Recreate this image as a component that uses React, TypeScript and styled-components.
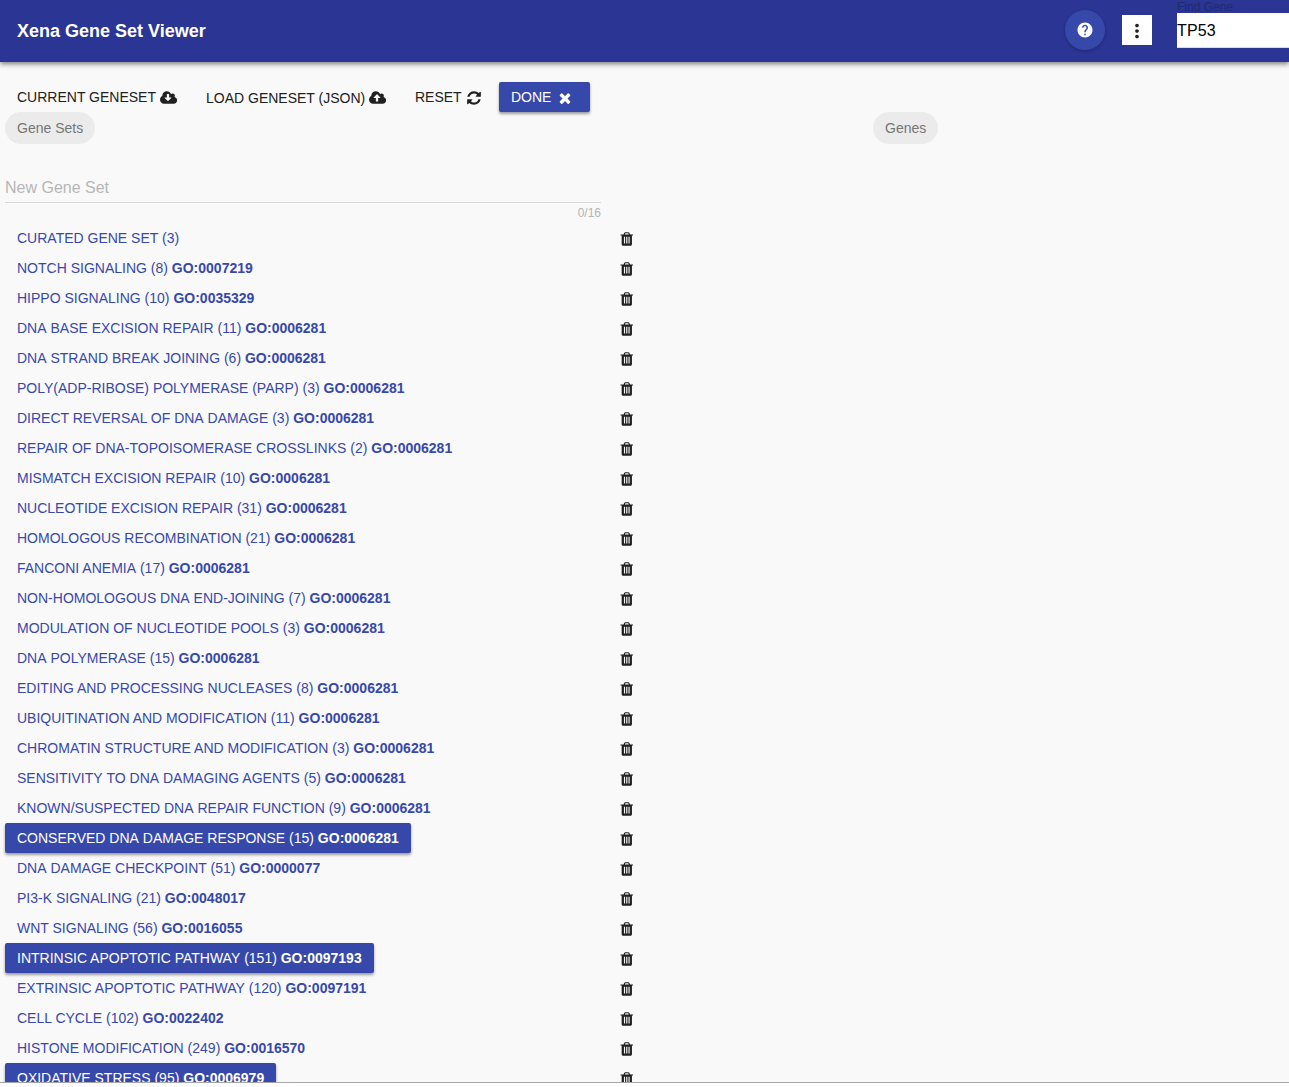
import React from 'react';
import styled, { createGlobalStyle, css } from 'styled-components';

const Global = createGlobalStyle`
  *, *::before, *::after { box-sizing: border-box; }
  html, body { margin: 0; height: 100%; overflow: hidden; background: #fff; }
  body { font-family: Helvetica, "Liberation Sans", Arial, sans-serif; color: #212121; }
  #root { height: 100%; }
`;

const Page = styled.div`
  display: flex;
  flex-direction: column;
  height: 1087px;
  overflow: hidden;
`;

const AppBar = styled.header`
  position: relative;
  z-index: 1;
  flex: none;
  display: flex;
  align-items: center;
  height: 62px;
  padding-left: 17px;
  overflow: visible;
  background: #2a3594;
  box-shadow: 0 2px 5px rgba(0, 0, 0, 0.5);
`;

const Title = styled.h1`
  flex: 1;
  margin: 0;
  font-size: 18px;
  line-height: 24px;
  font-weight: 700;
  color: #fff;
`;

const HelpButton = styled.button`
  display: flex;
  align-items: center;
  justify-content: center;
  width: 40px;
  height: 40px;
  margin: 0 17px 2px 0;
  padding: 0;
  border: 0;
  border-radius: 50%;
  background: #3748ab;
  color: #fff;
  box-shadow: 0 1px 3px rgba(0, 0, 0, 0.25);
`;

const MenuButton = styled.button`
  display: flex;
  align-items: center;
  justify-content: center;
  width: 30px;
  height: 30px;
  margin: 0 25px 2px 0;
  padding: 0;
  border: 0;
  background: #fff;
  color: #212121;
`;

const FindGene = styled.label`
  display: flex;
  flex-direction: column;
  align-self: flex-start;
  width: 112px;
  height: 48px;
`;

const FindLabel = styled.span`
  height: 13px;
  font-size: 12px;
  line-height: 14px;
  color: #202a72;
`;

const FindInput = styled.input`
  width: 100%;
  height: 35px;
  padding: 2px 0 0;
  border: 0;
  border-bottom: 1px solid #dcdcdc;
  border-radius: 0;
  outline: 0;
  background: #fff;
  color: #000;
  font: 16px "Liberation Sans", Arial, sans-serif;
  letter-spacing: 0.15px;
`;

const Content = styled.main`
  flex: none;
  height: 1021px;
  padding: 20px 5px 0;
  overflow: hidden;
  background: #f9f9f9;
  border-bottom: 1px solid #a6a6a6;
`;

const raised = css`
  background: #3748ab;
  color: #fff;
  box-shadow: 0 2px 3px rgba(0, 0, 0, 0.38);
`;

const Toolbar = styled.div`
  display: flex;
  height: 30px;
`;

const ToolButton = styled.button<{ $width: number; $drop?: number; $gap?: number; $raised?: boolean }>`
  display: flex;
  align-items: center;
  gap: ${p => p.$gap ?? 4}px;
  width: ${p => p.$width}px;
  height: 30px;
  padding: ${p => (p.$drop ?? 0) * 2}px 0 0 12px;
  border: 0;
  border-radius: 2px;
  background: transparent;
  color: #212121;
  font: 14px/30px Helvetica, "Liberation Sans", Arial, sans-serif;
  white-space: nowrap;
  ${p => p.$raised && raised}
`;

const Columns = styled.div`
  display: grid;
  grid-template-columns: 868px 1fr;
`;

const Chip = styled.span`
  display: inline-flex;
  align-items: center;
  height: 32px;
  padding: 0 12px;
  border-radius: 16px;
  background: #ebebeb;
  color: #757575;
  font-size: 14px;
`;

const Field = styled.div`
  display: flex;
  flex-direction: column;
  width: 596px;
  height: 79px;
  padding-top: 28px;
`;

const FieldInput = styled.input`
  flex: none;
  height: 31px;
  padding: 2px 0 0;
  border: 0;
  border-bottom: 1px solid #d8d8d8;
  outline: 0;
  background: transparent;
  font: 16px Helvetica, "Liberation Sans", Arial, sans-serif;
  &::placeholder { color: #b6b6b6; opacity: 1; }
`;

const Counter = styled.span`
  align-self: flex-end;
  padding-top: 2px;
  font-size: 12px;
  line-height: 17px;
  color: #b3b3b3;
`;

const List = styled.ul`
  margin: 0;
  padding: 0;
  list-style: none;
`;

const Row = styled.li`
  display: grid;
  grid-template-columns: 615px auto;
  align-items: center;
  justify-content: start;
  height: 30px;
`;

const SetButton = styled.button<{ $selected?: boolean }>`
  justify-self: start;
  height: 30px;
  padding: 0 12px;
  border: 0;
  border-radius: 2px;
  background: transparent;
  color: #3748ab;
  font: 14px/30px Helvetica, "Liberation Sans", Arial, sans-serif;
  white-space: nowrap;
  ${p => p.$selected && raised}
`;

/* A space after A or Y is kerned tight by the font; this one keeps its full width. */
const FullSpace = styled.span`
  font-kerning: none;
`;

const Glyph = styled.svg<{ $w: number; $h: number; $top?: number }>`
  display: block;
  flex: none;
  width: ${p => p.$w}px;
  height: ${p => p.$h}px;
  margin-top: ${p => p.$top ?? 0}px;
  fill: currentColor;
`;

const cloud =
  'm640 288q0 159-112.5 271.5t-271.5 112.5h-1088q-185 0-316.5-131.5t-131.5-316.5q0-130 70-240t188-165q-2-30-2-43 0-212 150-362t362-150q156 0 285.5 87t188.5 231q71-62 166-62 106 0 181 75t75 181q0 76-41 138 130 31 213.5 135.5t83.5 238.5z';

const CloudDownload = () => (
  <Glyph $w={17.14} $h={16} $top={2} viewBox="64 0 1920 1792">
    <path d={'M1344 864q0-14-9-23t-23-9h-224v-352q0-13-9.5-22.5t-22.5-9.5h-192q-13 0-22.5 9.5t-9.5 22.5v352h-224q-13 0-22.5 9.5t-9.5 22.5q0 14 9 23l352 352q9 9 23 9t23-9l351-351q10-12 10-24z' + cloud} />
  </Glyph>
);

const CloudUpload = () => (
  <Glyph $w={17.14} $h={16} viewBox="64 0 1920 1792">
    <path d={'M1344 864q0-14-9-23l-352-352q-9-9-23-9t-23 9l-351 351q-10 12-10 24 0 14 9 23t23 9h224v352q0 13 9.5 22.5t22.5 9.5h192q13 0 22.5-9.5t9.5-22.5v-352h224q13 0 22.5-9.5t9.5-22.5z' + cloud} />
  </Glyph>
);

const Refresh = () => (
  <Glyph $w={16} $h={16} $top={2} viewBox="0 0 1792 1792">
    <path d="M1639 1056q0 5-1 7-64 268-268 434.5t-478 166.5q-146 0-282.5-55t-243.5-157l-129 129q-19 19-45 19t-45-19-19-45v-448q0-26 19-45t45-19h448q26 0 45 19t19 45-19 45l-137 137q71 66 161 102t187 36q134 0 250-65t186-179q11-17 53-117 8-23 30-23h192q13 0 22.5 9.5t9.5 22.5zm25-800v448q0 26-19 45t-45 19h-448q-26 0-45-19t-19-45 19-45l138-138q-148-137-349-137-134 0-250 65t-186 179q-11 17-53 117-8 23-30 23h-199q-13 0-22.5-9.5t-9.5-22.5v-7q65-268 270-434.5t480-166.5q146 0 284 55.5t245 156.5l130-129q19-19 45-19t45 19 19 45z" />
  </Glyph>
);

const Times = () => (
  <Glyph $w={16} $h={16} $top={2} viewBox="0 0 1792 1792">
    <path d="M1490 1322q0 40-28 68l-136 136q-28 28-68 28t-68-28l-294-294-294 294q-28 28-68 28t-68-28l-136-136q-28-28-28-68t28-68l294-294-294-294q-28-28-28-68t28-68l136-136q28-28 68-28t68 28l294 294 294-294q28-28 68-28t68 28l136 136q28 28 28 68t-28 68l-294 294 294 294q28 28 28 68z" />
  </Glyph>
);

const Trash = () => (
  <Glyph $w={13.6} $h={16} $top={2} viewBox="192 0 1408 1792">
    <path d="M704 1376v-704q0-14-9-23t-23-9h-64q-14 0-23 9t-9 23v704q0 14 9 23t23 9h64q14 0 23-9t9-23zm256 0v-704q0-14-9-23t-23-9h-64q-14 0-23 9t-9 23v704q0 14 9 23t23 9h64q14 0 23-9t9-23zm256 0v-704q0-14-9-23t-23-9h-64q-14 0-23 9t-9 23v704q0 14 9 23t23 9h64q14 0 23-9t9-23zm-544-992h448l-48-117q-7-9-17-11h-317q-10 2-17 11zm928 32v64q0 14-9 23t-23 9h-96v948q0 83-47 143.5t-113 60.5h-832q-66 0-113-58.5t-47-141.5v-952h-96q-14 0-23-9t-9-23v-64q0-14 9-23t23-9h309l70-167q15-37 54-63t79-26h320q40 0 79 26t54 63l70 167h309q14 0 23 9t9 23z" />
  </Glyph>
);

const Help = () => (
  <Glyph $w={18} $h={18} viewBox="0 0 24 24">
    <path d="M12 2C6.48 2 2 6.48 2 12s4.48 10 10 10 10-4.48 10-10S17.52 2 12 2zm1 17h-2v-2h2v2zm2.07-7.75l-.9.92C13.45 12.9 13 13.5 13 15h-2v-.5c0-1.1.45-2.1 1.17-2.83l1.24-1.26c.37-.36.59-.86.59-1.41 0-1.1-.9-2-2-2s-2 .9-2 2H8c0-2.21 1.79-4 4-4s4 1.79 4 4c0 .88-.36 1.68-.93 2.25z" />
  </Glyph>
);

const MoreVert = () => (
  <Glyph $w={22} $h={22} $top={1} viewBox="0 0 24 24">
    <path d="M12 8c1.1 0 2-.9 2-2s-.9-2-2-2-2 .9-2 2 .9 2 2 2zm0 2c-1.1 0-2 .9-2 2s.9 2 2 2 2-.9 2-2-.9-2-2-2zm0 6c-1.1 0-2 .9-2 2s.9 2 2 2 2-.9 2-2-.9-2-2-2z" />
  </Glyph>
);

type GeneSet = { name: string; count: number; go?: string; selected?: boolean };

const REPAIR = 'GO:0006281';

const geneSets: GeneSet[] = [
  { name: 'CURATED GENE SET', count: 3 },
  { name: 'NOTCH SIGNALING', count: 8, go: 'GO:0007219' },
  { name: 'HIPPO SIGNALING', count: 10, go: 'GO:0035329' },
  { name: 'DNA BASE EXCISION REPAIR', count: 11, go: REPAIR },
  { name: 'DNA STRAND BREAK JOINING', count: 6, go: REPAIR },
  { name: 'POLY(ADP-RIBOSE) POLYMERASE (PARP)', count: 3, go: REPAIR },
  { name: 'DIRECT REVERSAL OF DNA DAMAGE', count: 3, go: REPAIR },
  { name: 'REPAIR OF DNA-TOPOISOMERASE CROSSLINKS', count: 2, go: REPAIR },
  { name: 'MISMATCH EXCISION REPAIR', count: 10, go: REPAIR },
  { name: 'NUCLEOTIDE EXCISION REPAIR', count: 31, go: REPAIR },
  { name: 'HOMOLOGOUS RECOMBINATION', count: 21, go: REPAIR },
  { name: 'FANCONI ANEMIA', count: 17, go: REPAIR },
  { name: 'NON-HOMOLOGOUS DNA END-JOINING', count: 7, go: REPAIR },
  { name: 'MODULATION OF NUCLEOTIDE POOLS', count: 3, go: REPAIR },
  { name: 'DNA POLYMERASE', count: 15, go: REPAIR },
  { name: 'EDITING AND PROCESSING NUCLEASES', count: 8, go: REPAIR },
  { name: 'UBIQUITINATION AND MODIFICATION', count: 11, go: REPAIR },
  { name: 'CHROMATIN STRUCTURE AND MODIFICATION', count: 3, go: REPAIR },
  { name: 'SENSITIVITY TO DNA DAMAGING AGENTS', count: 5, go: REPAIR },
  { name: 'KNOWN/SUSPECTED DNA REPAIR FUNCTION', count: 9, go: REPAIR },
  { name: 'CONSERVED DNA DAMAGE RESPONSE', count: 15, go: REPAIR, selected: true },
  { name: 'DNA DAMAGE CHECKPOINT', count: 51, go: 'GO:0000077' },
  { name: 'PI3-K SIGNALING', count: 21, go: 'GO:0048017' },
  { name: 'WNT SIGNALING', count: 56, go: 'GO:0016055' },
  { name: 'INTRINSIC APOPTOTIC PATHWAY', count: 151, go: 'GO:0097193', selected: true },
  { name: 'EXTRINSIC APOPTOTIC PATHWAY', count: 120, go: 'GO:0097191' },
  { name: 'CELL CYCLE', count: 102, go: 'GO:0022402' },
  { name: 'HISTONE MODIFICATION', count: 249, go: 'GO:0016570' },
  { name: 'OXIDATIVE STRESS', count: 95, go: 'GO:0006979', selected: true },
];

const SetName = ({ name }: { name: string }) => (
  <>
    {`${name} `.split(/(?<=[AY])( )/).map((part, i) =>
      part === ' ' ? <FullSpace key={i}> </FullSpace> : part,
    )}
  </>
);

export default function App() {
  return (
    <Page>
      <Global />
      <AppBar>
        <Title>Xena Gene Set Viewer</Title>
        <HelpButton><Help /></HelpButton>
        <MenuButton><MoreVert /></MenuButton>
        <FindGene>
          <FindLabel>Find Gene</FindLabel>
          <FindInput defaultValue="TP53" />
        </FindGene>
      </AppBar>
      <Content>
        <Toolbar>
          <ToolButton $width={189}>CURRENT GENESET <CloudDownload /></ToolButton>
          <ToolButton $width={209} $drop={1}>LOAD GENESET (JSON) <CloudUpload /></ToolButton>
          <ToolButton $width={96}>RESET <Refresh /></ToolButton>
          <ToolButton $width={91} $gap={5.5} $raised>DONE <Times /></ToolButton>
        </Toolbar>
        <Columns>
          <section>
            <Chip>Gene Sets</Chip>
            <Field>
              <FieldInput placeholder="New Gene Set" />
              <Counter>0/16</Counter>
            </Field>
            <List>
              {geneSets.map(set => (
                <Row key={set.name}>
                  <SetButton $selected={set.selected}>
                    <SetName name={set.name} />
                    ({set.count}) {set.go && <b>{set.go}</b>}
                  </SetButton>
                  <Trash />
                </Row>
              ))}
            </List>
          </section>
          <section>
            <Chip>Genes</Chip>
          </section>
        </Columns>
      </Content>
    </Page>
  );
}
